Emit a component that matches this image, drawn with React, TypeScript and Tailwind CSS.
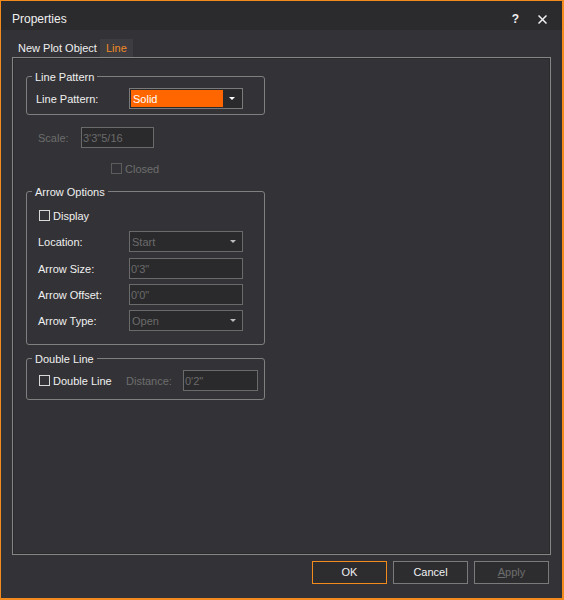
import React from "react";

function Check({ disabled }: { disabled?: boolean }) {
  return (
    <span
      className={`block w-[11px] h-[11px] border ${disabled ? "border-[#5c5c5c]" : "border-[#d8d8d8]"}`}
    />
  );
}

function Tri({ color }: { color: string }) {
  return (
    <svg width="6" height="3" viewBox="0 0 6 3" className="block">
      <path d="M0 0H6L3 3Z" fill={color} />
    </svg>
  );
}

function Group({
  title,
  className,
  children,
}: {
  title: string;
  className: string;
  children: React.ReactNode;
}) {
  return (
    <div className={`relative border border-[#7f7f7f] rounded-[3px] ${className}`}>
      <span className="absolute left-[5px] -top-[7px] px-[3px] bg-[#333337] leading-[14px] text-[#f0f0f0] whitespace-nowrap">
        {title}
      </span>
      {children}
    </div>
  );
}

function DisSelect({ value }: { value: string }) {
  return (
    <div className="w-[114px] h-[21px] border border-[#6a6a6a] bg-[#2a2a2d] flex items-center">
      <span className="flex-1 pl-[2px] pt-[1px] text-[#6a6a6a] leading-[19px]">{value}</span>
      <span className="w-[18px] flex items-center justify-center">
        <Tri color="#bdbdbd" />
      </span>
    </div>
  );
}

function DisInput({ value, w }: { value: string; w: string }) {
  return (
    <div className={`${w} h-[21px] border border-[#6a6a6a] bg-[#2a2a2d] pl-[1px] pt-[1px] text-[#6a6a6a] leading-[18px]`}>
      {value}
    </div>
  );
}

export default function App() {
  return (
    <div className="w-[564px] h-[600px] bg-[#333337] border-t border-l border-r-2 border-b-2 border-[#f28a1e] flex flex-col text-[11px] text-[#f0f0f0] font-['Liberation_Sans',Arial,sans-serif]">
      {/* Title bar */}
      <div className="h-[29px] bg-[#2b2b2e] flex items-start pl-[11px] pt-[11px] pr-[15px]">
        <span className="text-[12px] leading-[14px] flex-1">Properties</span>
        <span className="text-[12px] leading-[14px] font-bold mr-[19px]">?</span>
        <svg width="9" height="9" viewBox="0 0 9 9" className="mt-[3px]">
          <path d="M0.5 0.5L8.5 8.5M8.5 0.5L0.5 8.5" stroke="#f0f0f0" strokeWidth="1.5" />
        </svg>
      </div>

      {/* Tabs */}
      <div className="mt-[9px] ml-[11px] h-[18px] flex text-[11px] leading-[18px] whitespace-nowrap">
        <span className="pl-[6px] w-[88px]">New Plot Object</span>
        <span className="px-[6px] bg-[#3c3c41] text-[#f08a24]">Line</span>
      </div>

      {/* Panel */}
      <div className="ml-[11px] w-[539px] h-[498px] border border-[#858585]">
        <div className="h-full border border-[#2a2a2d] flex flex-col">
          <Group title="Line Pattern" className="mt-[17px] ml-[12px] w-[239px] h-[39px] pt-[11px] pl-[9px]">
            <div className="flex items-start">
              <span className="w-[93px] leading-[21px] pt-[1px]">Line Pattern:</span>
              <div className="w-[114px] h-[21px] border border-[#7a7a7a] bg-[#2a2a2d] p-px flex">
                <span className="flex-1 bg-[#ff6600] pl-[2px] pt-[1px] leading-[16px] text-white">Solid</span>
                <span className="w-[18px] flex items-center justify-center">
                  <Tri color="#ffffff" />
                </span>
              </div>
            </div>
          </Group>

          <div className="mt-[12px] ml-[24px] flex items-center">
            <span className="w-[43px] pt-[2px] text-[#6d6d6d]">Scale:</span>
            <DisInput value={"3'3\"5/16"} w="w-[73px]" />
          </div>

          <div className="mt-[15px] ml-[97px] h-[11px] flex items-center gap-[3px] text-[#6d6d6d]">
            <Check disabled />
            <span className="leading-[14px] pt-[1px]">Closed</span>
          </div>

          <Group title="Arrow Options" className="mt-[17px] ml-[12px] w-[239px] h-[154px] pt-[18px] pl-[11px]">
            <div className="ml-[1px] h-[11px] flex items-center gap-[3px]">
              <Check />
              <span className="leading-[14px] pt-[1px]">Display</span>
            </div>
            <div className="mt-[10px] flex items-center">
              <span className="w-[91px] pt-[2px]">Location:</span>
              <DisSelect value="Start" />
            </div>
            <div className="mt-[6px] flex items-center">
              <span className="w-[91px] pt-[2px]">Arrow Size:</span>
              <DisInput value={"0'3\""} w="w-[114px]" />
            </div>
            <div className="mt-[5px] flex items-center">
              <span className="w-[91px] pt-[2px]">Arrow Offset:</span>
              <DisInput value={"0'0\""} w="w-[114px]" />
            </div>
            <div className="mt-[5px] flex items-center">
              <span className="w-[91px] pt-[2px]">Arrow Type:</span>
              <DisSelect value="Open" />
            </div>
          </Group>

          <Group title="Double Line" className="mt-[13px] ml-[12px] w-[239px] h-[42px] pt-[11px] pl-[12px]">
            <div className="flex items-center">
              <div className="w-[87px] flex items-center gap-[3px]">
                <Check />
                <span className="leading-[14px] pt-[1px]">Double Line</span>
              </div>
              <span className="w-[57px] pt-[2px] text-[#6d6d6d]">Distance:</span>
              <DisInput value={"0'2\""} w="w-[75px]" />
            </div>
          </Group>
        </div>
      </div>

      {/* Buttons */}
      <div className="mt-[6px] pr-[13px] flex justify-end gap-[6px]">
        <button className="w-[75px] h-[23px] border border-[#f28a1e] bg-[#2d2d30] text-[#f0f0f0] text-[11px] leading-[21px]">
          OK
        </button>
        <button className="w-[75px] h-[23px] border border-[#7a7a7a] bg-[#2d2d30] text-[#f0f0f0] text-[11px] leading-[21px]">
          Cancel
        </button>
        <button className="w-[75px] h-[23px] border border-[#7a7a7a] bg-[#2d2d30] text-[#6d6d6d] text-[11px] leading-[21px]">
          <span className="underline">A</span>pply
        </button>
      </div>
    </div>
  );
}
